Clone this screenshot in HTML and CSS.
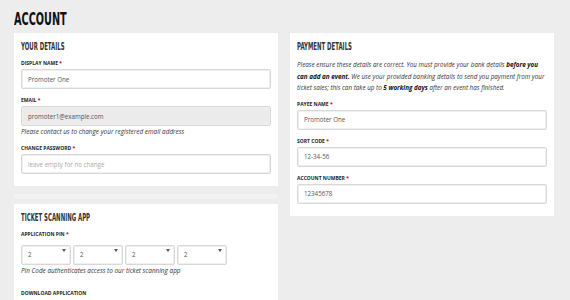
FILE: index.html
```html
<!DOCTYPE html>
<html lang="en">
<head>
  <meta charset="UTF-8">
  <meta name="viewport" content="width=device-width, initial-scale=1.0">
  <title>Account</title>
  <link rel="stylesheet" href="styles.css">
</head>
<body>
  <div class="container">
    <h1 class="page-title"><span>ACCOUNT</span></h1>
    <div class="account-grid">
      <div class="column">
        <!-- Your Details -->
        <div class="card">
          <h2><span>YOUR DETAILS</span></h2>
          <div class="form-group">
            <label for="display-name">Display Name <b class="req">*</b></label>
            <input type="text" id="display-name" value="Promoter One">
          </div>
          <div class="form-group">
            <label for="email">Email <b class="req">*</b></label>
            <input type="text" id="email" value="promoter1@example.com" readonly>
            <p class="help">Please contact us to change your registered email address</p>
          </div>
          <div class="form-group">
            <label for="password">Change Password <b class="req">*</b></label>
            <input type="password" id="password" placeholder="leave empty for no change">
          </div>
        </div>
        <div class="card-sep"></div>
        <!-- Ticket Scanning App -->
        <div class="card">
          <h2><span>TICKET SCANNING APP</span></h2>
          <div class="form-group">
            <label>Application Pin <b class="req">*</b></label>
            <div class="pin-row">
              <div class="pin-select"><select><option>2</option></select></div>
              <div class="pin-select"><select><option>2</option></select></div>
              <div class="pin-select"><select><option>2</option></select></div>
              <div class="pin-select"><select><option>2</option></select></div>
            </div>
            <p class="help">Pin Code authenticates access to our ticket scanning app</p>
          </div>
          <div class="form-group download">
            <label>Download Application</label>
            <p class="note">To scan tickets you will first need to download our free app and log in with this PIN</p>
          </div>
        </div>
      </div>
      <div class="column">
        <!-- Payment Details -->
        <div class="card">
          <h2><span>PAYMENT DETAILS</span></h2>
          <p class="intro">Please ensure these details are correct. You must provide your bank details <b>before you can add an event.</b> We use your provided banking details to send you payment from your ticket sales; this can take up to <b>5 working days</b> after an event has finished.</p>
          <div class="form-group">
            <label for="payee">Payee Name <b class="req">*</b></label>
            <input type="text" id="payee" value="Promoter One">
          </div>
          <div class="form-group">
            <label for="sort-code">Sort Code <b class="req">*</b></label>
            <input type="text" id="sort-code" value="12-34-56">
          </div>
          <div class="form-group">
            <label for="account-number">Account Number <b class="req">*</b></label>
            <input type="text" id="account-number" value="12345678">
          </div>
        </div>
      </div>
    </div>
  </div>
</body>
</html>
```

FILE: styles.css
```css
body {
  font-family: 'Open Sans', sans-serif;
  background: #ededed;
  margin: 0;
  padding: 0;
  color: #333;
}
.container {
  width: 540px;
  margin: 0 0 0 14px;
}
.page-title,
.card h2 {
  font-family: 'DejaVu Sans Condensed', 'DejaVu Sans', sans-serif;
  font-weight: bold;
  color: #111;
  margin: 0;
  white-space: nowrap;
}
.page-title span,
.card h2 span {
  display: inline-block;
  transform: scaleX(0.6);
  transform-origin: left center;
}
.page-title {
  font-size: 18px;
  line-height: 22px;
  padding-top: 8px;
  margin-bottom: 3px;
}
.account-grid {
  display: grid;
  grid-template-columns: 1fr 1fr;
  gap: 12px;
  align-items: start;
}
.column {
  display: flex;
  flex-direction: column;
}
.card {
  background: #fff;
  padding: 7px 7px 5px;
}
.card h2 {
  font-size: 10px;
  line-height: 14px;
  margin-bottom: 5px;
  color: #333;
}
.card-sep {
  height: 5px;
  margin: 8px 0 5px;
  background: #f2f2f2;
}
.form-group {
  display: flex;
  flex-direction: column;
  margin-bottom: 7px;
}
label {
  font-size: 5px;
  line-height: 8px;
  font-weight: 700;
  text-transform: uppercase;
  color: #222;
  margin-bottom: 2px;
}
.req {
  color: #c4161c;
}
input,
select {
  box-sizing: border-box;
  height: 20px;
  padding: 0 6px;
  border: 1px solid #d8d8d8;
  border-radius: 2px;
  box-shadow: inset 0 0 0 1px #f0f0f0;
  font-family: 'Open Sans', sans-serif;
  font-size: 6.2px;
  color: #555;
  background: #fff;
  outline: none;
}
input::placeholder {
  color: #aaa;
}
input[readonly] {
  background: #ebebeb;
}
.help {
  margin: 1px 0 0;
  font-size: 6.4px;
  line-height: 10px;
  font-style: italic;
  color: #333;
}
.pin-row {
  display: flex;
  gap: 2px;
}
.pin-select {
  position: relative;
  width: 50px;
}
.pin-select select {
  width: 100%;
  appearance: none;
  -webkit-appearance: none;
}
.pin-select::after {
  content: '';
  position: absolute;
  right: 5px;
  top: 9px;
  border-left: 2.5px solid transparent;
  border-right: 2.5px solid transparent;
  border-top: 3px solid #555;
}
.download {
  margin-top: 13px;
}
.note {
  margin: 0;
  font-size: 6.2px;
  line-height: 10px;
  color: #444;
}
.intro {
  margin: 3px 0 6px;
  font-size: 6.3px;
  line-height: 11.5px;
  font-style: italic;
  color: #333;
}
.intro b {
  font-weight: 700;
  color: #111;
}
```
